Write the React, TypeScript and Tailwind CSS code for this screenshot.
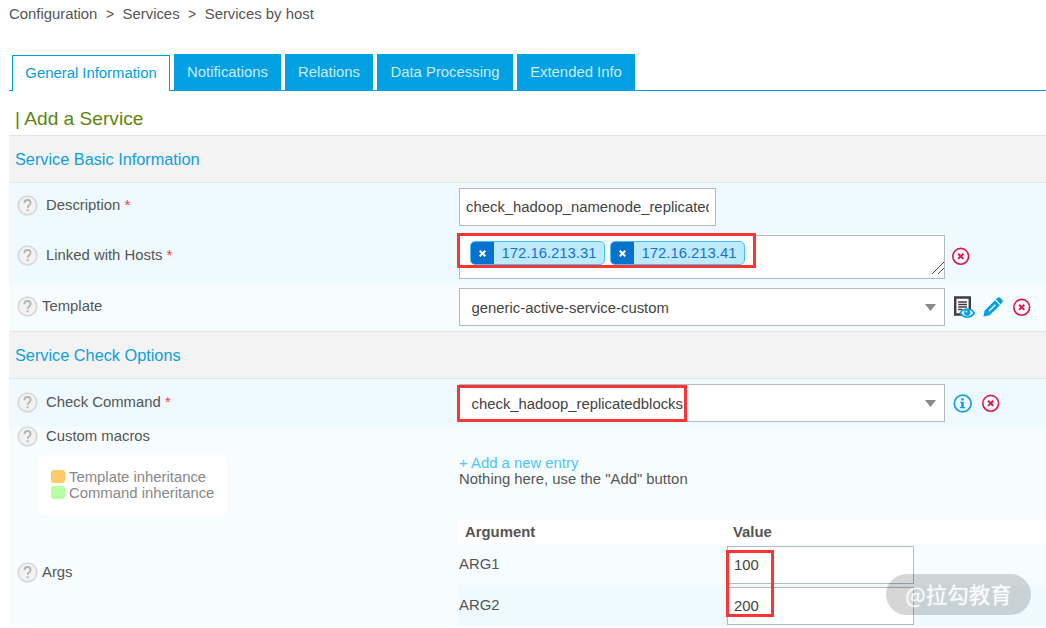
import React from 'react';

const TABS = ['Notifications', 'Relations', 'Data Processing', 'Extended Info'];
const TAB_WIDTHS = ['w-[107px]', 'w-[88px]', 'w-[136px]', 'w-[118px]'];
const HOSTS = ['172.16.213.31', '172.16.213.41'];

function HelpIcon() {
  return (
    <svg className="w-[21px] h-[21px] shrink-0" viewBox="0 0 21 21" fill="none">
      <circle cx="10.5" cy="10.5" r="9.3" fill="#f3f3f3" stroke="#d9d9d9" strokeWidth="1.8" />
      <path d="M7.4 8.2C7.4 6.2 8.7 5 10.5 5s3.1 1.2 3.1 2.9c0 2.2-2.9 2.5-2.9 4.8" stroke="#b4b4b4" strokeWidth="1.8" />
      <path d="M9.7 14.2h1.9v2H9.7z" fill="#b4b4b4" />
    </svg>
  );
}

function ClearIcon() {
  return (
    <svg className="w-[18px] h-[18px] shrink-0" viewBox="0 0 18 18" fill="none" stroke="#e2174c">
      <circle cx="8.7" cy="9.3" r="7.9" strokeWidth="1.6" />
      <path d="M6.1 6.7l5.2 5.2M11.3 6.7l-5.2 5.2" strokeWidth="2" />
    </svg>
  );
}

function InfoIcon() {
  return (
    <svg className="w-[19px] h-[19px] shrink-0" viewBox="0 0 19 19" fill="none">
      <circle cx="9.7" cy="9.5" r="8.4" stroke="#189fdd" strokeWidth="1.7" />
      <path d="M8.2 4.2h2.6v2.2H8.2zM7.2 7.7h3.6v5.2h1.3v1.4H6.9v-1.4h1.3V9.1h-1z" fill="#189fdd" />
    </svg>
  );
}

function ViewIcon() {
  return (
    <svg className="w-[22px] h-[23px] shrink-0" viewBox="0 0 22 23" fill="none">
      <path d="M2.2 1.5h14.6v17H2.2z" fill="#fff" stroke="#3d3d3f" strokeWidth="2.4" />
      <path d="M5.2 6h8.7M5.2 8.5h8.7M5.2 11h8.7M5.2 13.5h4" stroke="#3d3d3f" strokeWidth="1.3" />
      <path d="M7.2 17c3.4-5.4 10.8-5.4 14 0-3.2 5.4-10.600 5.4-14 0z" fill="#f7fdff" stroke="#00a0e2" strokeWidth="1.6" />
      <circle cx="14.2" cy="16.6" r="3.2" fill="#00a0e2" />
      <circle cx="13.4" cy="15.6" r="0.9" fill="#fff" />
    </svg>
  );
}

function EditIcon() {
  return (
    <svg className="w-[20px] h-[20px] shrink-0" viewBox="0 0 20 20" fill="none">
      <path d="M.4 19.6l1.3-6.2L12 3.3l4.9 4.9L6.6 18.3z" fill="#00a0e2" />
      <path d="M12.9 2.5l1.5-1.5c.9-.9 2.2-.8 3 0l1.7 1.7c.8.8.9 2.1 0 3l-1.5 1.5z" fill="#00a0e2" />
      <path d="M5.8 14.3l6.6-6.6" stroke="#fff" strokeWidth="1.3" />
    </svg>
  );
}

interface LabelProps {
  text: string;
  required?: boolean;
  tight?: boolean;
}

function Label({ text, required, tight }: LabelProps) {
  return (
    <div className={tight ? 'flex items-center gap-1' : 'flex items-center gap-2'}>
      <HelpIcon />
      <span className="relative -top-px whitespace-pre">
        {text}
        {required && <span className="text-[#f33]"> *</span>}
      </span>
    </div>
  );
}

function SectionHeader({ title }: { title: string }) {
  return (
    <div className="h-12 bg-[#f3f3f3] border-y border-[#e4e5e6] pl-1.5 pt-[15px] text-[16.3px] text-[#0f9fdd]">
      {title}
    </div>
  );
}

function SelectBox({ value }: { value: string }) {
  return (
    <div className="w-[486px] h-[38px] bg-white border border-[#b6b9bc] flex items-center justify-between pl-[11.5px] pr-2 text-[#444]">
      <span className="pt-0.5">{value}</span>
      <svg className="w-[11px] h-[7px]" viewBox="0 0 11 7">
        <path d="M0 0h11L5.5 7z" fill="#888" />
      </svg>
    </div>
  );
}

export default function App() {
  return (
    <div className="relative w-[1046px] h-[628px] overflow-hidden bg-white font-['Liberation_Sans',Arial,sans-serif] text-[14.86px] leading-4 text-[#555]">
      {/* Breadcrumb */}
      <div className="h-[54px] pl-[9px] pt-1.5 flex gap-[8.5px]">
        <span>Configuration</span>
        <span className="text-sm leading-4">&gt;</span>
        <span>Services</span>
        <span className="text-sm leading-4">&gt;</span>
        <span>Services by host</span>
      </div>

      <div className="ml-[9px]">
        {/* Tabs */}
        <div className="h-[37px] flex items-end text-[#c8edfb]">
          <div className="w-[3px] h-px bg-[#00a0e2]" />
          <div className="w-[158px] h-9 border border-b-0 border-[#00a0e2] pb-px flex items-center justify-center text-[#00a0e2]">
            General Information
          </div>
          <div className="grow h-[37px] pl-1 flex gap-1 border-b border-[#00a0e2]">
            {TABS.map((tab, i) => (
              <div key={tab} className={`${TAB_WIDTHS[i]} h-9 bg-[#00a0e2] flex items-center justify-center`}>
                {tab}
              </div>
            ))}
          </div>
        </div>

        <h1 className="h-11 pt-[18px] pl-1.5 text-[19.15px] leading-5 text-[#5d8510]">| Add a Service</h1>

        <SectionHeader title="Service Basic Information" />
        <div className="h-[100px] bg-[#eefaff]">
          <div className="h-[52px] pt-[5px] flex">
            <div className="w-[450px] pl-2 pt-[7px]">
              <Label text="Description" required />
            </div>
            <div className="w-[257px] h-[38px] bg-white border border-[#b6b9bc] px-1.5 flex items-center text-[#444]">
              <span className="overflow-hidden whitespace-nowrap">check_hadoop_namenode_replicated</span>
            </div>
          </div>
          <div className="flex">
            <div className="w-[450px] pl-2 pt-2.5">
              <Label text="Linked with Hosts" required />
            </div>
            <div className="relative w-[486px] h-11 bg-white border border-[#b6b9bc] pl-2.5 pt-[5px] flex gap-[5px]">
              {HOSTS.map((host) => (
                <div key={host} className="w-[135px] h-6 flex rounded-[5px] overflow-hidden border border-[#3fc4fb] bg-[#bdeaff] text-[#1274cc]">
                  <span className="w-[23px] bg-[#0672ce] flex items-center justify-center">
                    <svg className="w-[7px] h-[7px]" viewBox="0 0 7 7" stroke="#fff" strokeWidth="2">
                      <path d="M.7.7l5.6 5.6M6.3.7L.7 6.3" />
                    </svg>
                  </span>
                  <span className="grow flex items-center justify-center">{host}</span>
                </div>
              ))}
              <svg className="absolute right-0 bottom-1 w-3 h-3" viewBox="0 0 12 12" stroke="#555" fill="none">
                <path d="M0 12L12 0M6 12l6-6" />
              </svg>
              <div className="absolute -left-[3px] -top-[3px] w-[299px] h-[35px] border-3 border-[#f93535]" />
            </div>
            <div className="pl-[7px] pt-3">
              <ClearIcon />
            </div>
          </div>
        </div>
        <div className="h-12 bg-[#f7fdff] pt-[5px] flex">
          <div className="w-[450px] pl-2 pt-2">
            <Label text="Template" tight />
          </div>
          <SelectBox value="generic-active-service-custom" />
          <div className="pl-2 pt-2 flex gap-2">
            <ViewIcon />
            <div className="pt-px">
              <EditIcon />
            </div>
            <div className="pl-0.5 pt-0.5">
              <ClearIcon />
            </div>
          </div>
        </div>

        <SectionHeader title="Service Check Options" />
        <div className="h-12 bg-[#eefaff] pt-[5px] flex">
          <div className="w-[450px] pl-2 pt-2">
            <Label text="Check Command" required />
          </div>
          <div className="relative">
            <SelectBox value="check_hadoop_replicatedblocks" />
            <div className="absolute -left-0.5 top-px w-[230px] h-[37px] border-3 border-[#f93535]" />
          </div>
          <div className="pl-2 pt-2.5 flex gap-2.5">
            <InfoIcon />
            <ClearIcon />
          </div>
        </div>

        <div className="h-[200px] bg-[#f7fdff] flex">
          <div className="w-[450px] pl-2">
            <div className="-mt-px">
              <Label text="Custom macros" />
            </div>
            <div className="mt-2 ml-[21px] w-[189px] h-[60px] rounded-md bg-white pl-[13px] pt-3.5 text-[#888]">
              <div className="flex items-center gap-1 h-4">
                <i className="w-3.5 h-[13px] -mt-0.5 rounded-[3px] bg-[#ffca68]" />
                Template inheritance
              </div>
              <div className="flex items-center gap-1 h-4">
                <i className="w-3.5 h-[13px] -mt-0.5 rounded-[3px] bg-[#b6ffa2]" />
                Command inheritance
              </div>
            </div>
            <div className="mt-[47px]">
              <Label text="Args" tight />
            </div>
          </div>

          <div className="grow">
            <div className="h-[93px] pt-7">
              <div className="text-[#4bc7f7]">+ Add a new entry</div>
              <div>Nothing here, use the "Add" button</div>
            </div>
            {/* Command arguments */}
            <div className="h-6 bg-white flex items-center font-bold">
              <span className="w-[268px] pl-1.5">Argument</span>
              <span className="pl-1.5">Value</span>
            </div>
            <div className="relative">
              <div className="h-[41px] flex pt-0.5">
                <span className="w-[268px] pt-2.5">ARG1</span>
                <div className="w-[187px] h-[38px] bg-white border border-[#b6b9bc] pl-1.5 flex items-center text-[#444]">100</div>
              </div>
              <div className="h-[41px] flex pt-0.5 bg-[#eefaff]">
                <span className="w-[268px] pt-2.5">ARG2</span>
                <div className="w-[187px] h-[38px] bg-white border border-[#b6b9bc] pl-1.5 flex items-center text-[#444]">200</div>
              </div>
              <div className="absolute left-[267px] top-[6px] w-12 h-[67px] border-3 border-[#f93535]" />
            </div>
          </div>
        </div>
      </div>

      {/* Watermark */}
      <div className="absolute left-[886px] top-[574px] w-[145px] h-[41px] pb-0.5 rounded-full bg-black/16 flex items-center justify-center text-[21.5px] text-white/90 font-['Noto_Sans_CJK_SC',sans-serif] [text-shadow:0_0_2px_rgba(255,255,255,0.6)]">
        @拉勾教育
      </div>
    </div>
  );
}
